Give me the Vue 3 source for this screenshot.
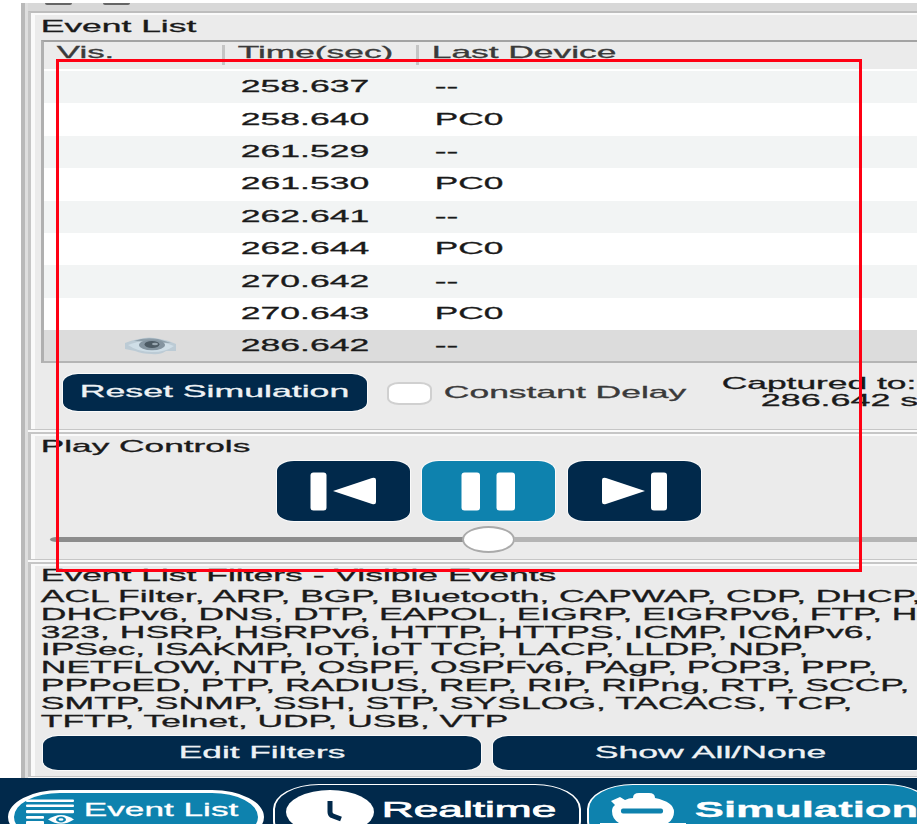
<script setup>
import { h } from 'vue'

// Wide label: one line of text fitted to the width w, baseline near 80% of its box.
const WideText = (p) => {
  const size = p.size || 17
  const box = Math.round(size * 1.2)
  return h('svg', { class: 'wide', width: p.w, height: box, style: { fontSize: size + 'px' } }, [
    h('text', { x: 0.8, y: box * 0.8 - 0.1, textLength: p.w - 1.5, lengthAdjust: 'spacingAndGlyphs', fill: 'currentColor' }, p.t),
  ])
}
WideText.props = ['t', 'w', 'size']

const events = [
  ['258.637', '--'], ['258.640', 'PC0'], ['261.529', '--'], ['261.530', 'PC0'], ['262.641', '--'],
  ['262.644', 'PC0'], ['270.642', '--'], ['270.643', 'PC0'], ['286.642', '--'],
]
const filters = [
  ['ACL Filter, ARP, BGP, Bluetooth, CAPWAP, CDP, DHCP,', 882],
  ['DHCPv6, DNS, DTP, EAPOL, EIGRP, EIGRPv6, FTP, H.', 888],
  ['323, HSRP, HSRPv6, HTTP, HTTPS, ICMP, ICMPv6,', 834],
  ['IPSec, ISAKMP, IoT, IoT TCP, LACP, LLDP, NDP,', 769],
  ['NETFLOW, NTP, OSPF, OSPFv6, PAgP, POP3, PPP,', 838],
  ['PPPoED, PTP, RADIUS, REP, RIP, RIPng, RTP, SCCP,', 870],
  ['SMTP, SNMP, SSH, STP, SYSLOG, TACACS, TCP,', 813],
  ['TFTP, Telnet, UDP, USB, VTP', 469],
]
</script>

<template>
  <div class="window">
    <div class="sidebar">
      <div class="topbar"><i></i><i></i></div>

      <section class="panel events">
        <div class="title"><WideText t="Event List" :w="157" /></div>
        <div class="table">
          <div class="row head">
            <span class="vis"><WideText t="Vis." :w="59" /></span>
            <span class="time"><WideText t="Time(sec)" :w="157" /></span>
            <span class="dev"><WideText t="Last Device" :w="186" /></span>
          </div>
          <div v-for="(e, i) in events" :key="i" class="row" :class="{ alt: i % 2 === 0, selected: i === 8 }">
            <span class="vis">
              <svg v-if="i === 8" class="eye" width="54" height="20" viewBox="0 0 54 20">
                <path d="M1 7Q8 4 15 3Q25 0 36 3Q44 4 52 8V15H42Q36 19 28 18Q18 18 11 15L1 13Z" fill="#bccbd5" />
                <path d="M4 9Q26 0 50 10Q42 16 28 16Q14 16 4 9Z" fill="#cfdee7" />
                <path d="M10 5Q20 1 34 3L47 7Q34 6 24 6Q16 5 10 5Z" fill="#8d9ea9" />
                <ellipse cx="28" cy="9" rx="13" ry="5.2" fill="#8494a0" />
                <ellipse cx="28" cy="8.5" rx="7.500" ry="3.4" fill="#4c5a64" />
                <ellipse cx="31" cy="8" rx="3" ry="1.3" fill="#98a6b0" />
              </svg>
            </span>
            <span class="time"><WideText :t="e[0]" :w="130" /></span>
            <span class="dev"><WideText :t="e[1]" :w="e[1] === '--' ? 25 : 70" /></span>
          </div>
        </div>
        <div class="actions">
          <button class="btn reset"><WideText t="Reset Simulation" :w="271" /></button>
          <span class="check"></span>
          <span class="delay"><WideText t="Constant Delay" :w="244" /></span>
          <div class="captured">
            <WideText t="Captured to:" :w="196" />
            <WideText class="second" t="286.642 s" :w="159" />
          </div>
        </div>
      </section>

      <section class="panel play">
        <div class="title"><WideText t="Play Controls" :w="211" /></div>
        <div class="controls">
          <button class="btn ctl">
            <svg width="133" height="60" viewBox="0 0 133 60">
              <rect x="33.5" y="11.5" width="16" height="38" rx="3" /><path d="M56 30L95 17Q99 16 99 19V41Q99 44 95 43Z" />
            </svg>
          </button>
          <button class="btn ctl active">
            <svg width="133" height="60" viewBox="0 0 133 60">
              <rect x="39.500" y="11.5" width="18.5" height="38" rx="3" /><rect x="74.500" y="11.5" width="18.5" height="38" rx="3" />
            </svg>
          </button>
          <button class="btn ctl">
            <svg width="133" height="60" viewBox="0 0 133 60">
              <rect x="83" y="11.5" width="16" height="38" rx="3" /><path d="M77 30L38 17Q34 16 34 19V41Q34 44 38 43Z" />
            </svg>
          </button>
        </div>
        <div class="slider"><span class="done"></span><span class="thumb"></span><span class="rest"></span></div>
      </section>

      <section class="panel filters">
        <div class="title"><WideText t="Event List Filters - Visible Events" :w="517" /></div>
        <div class="list">
          <div v-for="f in filters" :key="f[0]" class="line"><WideText :t="f[0]" :w="f[1]" /></div>
        </div>
        <div class="pair">
          <button class="btn edit"><WideText t="Edit Filters" :w="168" /></button>
          <button class="btn show"><WideText t="Show All/None" :w="233" /></button>
        </div>
      </section>
    </div>

    <nav class="modes">
      <div class="pill">
        <svg width="54" height="32" viewBox="0 0 54 32" fill="#fff">
          <rect x="0" y="2.500" width="48" height="2.6" rx="1" /><rect x="0" y="7.500" width="48" height="2.6" rx="1" />
          <rect x="0" y="13" width="48" height="3.2" rx="1" /><rect x="0" y="19" width="18" height="2.8" rx="1" />
          <rect x="0" y="24" width="18" height="4" rx="1" />
          <path d="M22 22.500Q35 13.500 48 22.500Q35 31 22 22.500Z" /><ellipse cx="35" cy="22.500" rx="5" ry="3" fill="#0e82ae" />
          <ellipse cx="35" cy="22.500" rx="2.500" ry="1.300" />
        </svg>
        <WideText t="Event List" :w="156" :size="18" />
      </div>
      <div class="mode real">
        <svg width="88" height="40" viewBox="0 0 88 40">
          <ellipse cx="44" cy="22" rx="44" ry="22" fill="#fff" />
          <path d="M44 11V22Q44 25 47 26L55 29" fill="none" stroke="#01294b" stroke-width="5" />
        </svg>
        <WideText t="Realtime" :w="176" :size="22" />
      </div>
      <div class="mode sim">
        <svg width="88" height="38" viewBox="0 0 88 38" fill="#fff">
          <path d="M34 5Q34 0 40 0H50Q56 0 56 5Q75 9 75 19Q75 26 69 30H87V38H1V30H20Q13 26 13 18Q13 14 16 12L12 8L21 4L26 7Q30 5 34 5Z" />
          <rect x="22" y="15.500" width="42" height="5" rx="2" fill="#0e82ae" />
        </svg>
        <WideText t="Simulation" :w="225" :size="22" />
      </div>
    </nav>

    <div class="marker"></div>
  </div>
</template>

<style>
body { margin: 0; background: #fff; }
svg.wide { display: block; flex: none; overflow: visible; }
svg.wide text { stroke: currentColor; stroke-width: 0.3px; }
</style>

<style scoped>
.window { position: relative; box-sizing: border-box; width: 917px; height: 824px; padding-top: 3px; overflow: hidden; font-family: "Liberation Sans", Arial, sans-serif; color: #1a1a1a; }
.window * { box-sizing: border-box; }
.sidebar { height: 775px; margin-left: 21px; padding-left: 3px; border-left: 4px solid #b9b9b9; background: #dedede; overflow: hidden; }
.topbar { display: flex; gap: 31px; height: 8px; padding-left: 17px; background: #d8d8d8; }
.topbar i { width: 27px; height: 1.5px; border-radius: 0 0 12px 12px; background: #666; }
.panel { border: solid #c6c6c6; border-width: 2px 0 1px 3px; background: #ebebeb; box-shadow: inset 4px 2px #fafafa, 0 3px #fafafa; padding-left: 8px; overflow: hidden; }
.title { height: 20px; padding-left: 1px; }
.events { height: 419px; border-top-color: #bdbdbd; }
.events .title { height: 27px; padding-top: 3px; }
.table { margin-left: 2px; height: 323px; border: solid #a3a3a3; border-width: 2px 0 2px 3px; border-left-color: #b0b0b0; border-bottom-color: #b4b4b4; background: #fff; }
.row { display: grid; grid-template-columns: 180px 196px 1fr; height: 32.4px; align-items: center; background: #fff; }
.row > span { height: 22px; }
.row.alt { background: #f2f4f4; }
.row.selected { height: 31px; background: #dcdcdc; }
.row.head { height: 27px; margin-bottom: 2px; background: #ebebeb; color: #3a3a3a; align-items: start; }
.time { padding-left: 16px; }
.dev { padding-left: 14px; }
.row.head .vis { padding-left: 12px; }
.row.head .time { border-left: 3px solid #c4c4c4; padding-left: 12px; margin-top: 3px; margin-left: -2px; height: 20px; }
.row.head .dev { border-left: 3px solid #c4c4c4; padding-left: 12px; margin-top: 3px; margin-left: -4px; height: 20px; }
.row.head .time svg, .row.head .dev svg { margin-top: -3px; }
.vis svg.eye { display: block; margin: 1px 0 0 80px; }
.btn { display: flex; justify-content: center; align-items: center; flex: none; margin: 0; padding: 0; border: 0; border-radius: 15px / 9px; background: #01294b; color: #eef2f5; box-shadow: 0 0 0 1px #fafafa; }
.actions { display: flex; align-items: flex-start; padding: 11px 0 0 24px; }
.reset { width: 304px; height: 37px; padding: 0 2px 3px 0; }
.check { flex: none; width: 45px; height: 23px; margin: 8px 11px 0 20px; border: 2px solid #d0d0d0; border-radius: 12px / 7px; background: #fff; }
.delay { flex: none; width: 278px; padding-top: 8px; color: #3a3a3a; }
.captured { flex: none; width: 196px; margin-top: -1px; }
.captured .second { margin: -3px 0 0 39px; }
.play { height: 128px; margin-top: 2px; }
.play .title { padding-top: 2px; height: 27px; }
.controls { display: flex; gap: 12.5px; padding-left: 237.5px; }
.ctl { width: 133px; height: 60px; border-radius: 17px / 10px; }
.ctl svg { fill: #fff; }
.active { background: #0e82ae; }
.slider { display: flex; align-items: center; height: 27px; margin: 5px 0 0 11px; }
.done { width: 413px; height: 5px; border-radius: 8px 0 0 8px / 3px 0 0 3px; background: #8c8c8c; }
.thumb { width: 53px; height: 27px; margin: 0 -1px; border: 2px solid #aaa; border-radius: 50%; background: #fff; }
.rest { flex: 1; height: 5px; background: #b4b4b4; }
.filters { height: 215px; margin-top: 2px; }
.filters .title { height: 22px; padding-top: 1px; }
.list { padding-left: 1px; }
.line { height: 17.8px; }
.pair { display: flex; gap: 12px; padding: 8px 0 0 4px; }
.pair .btn { height: 34px; padding: 0 1px 3px 0; }
.edit { width: 438px; }
.show { width: 436px; }
.modes { display: flex; height: 46px; background: #01294b; color: #fff; overflow: hidden; }
.pill { display: flex; flex: none; width: 256px; height: 54px; margin: 12px 9px 0 8px; padding: 1px 0 0 12px; border: solid #fff; border-width: 3px 6px; border-radius: 52px / 27px; background: #0e82ae; gap: 3px; }
.pill svg { margin-top: 3px; }
.pill svg.wide { margin-top: 4px; }
.mode { display: flex; flex: none; height: 62px; margin-top: 6px; border: solid #fff; border-width: 1px 2px; border-radius: 46px / 25px; }
.real { width: 308px; margin-right: 6px; padding: 5px 0 0 11px; gap: 7px; }
.real :deep(svg.wide text) { stroke-width: 0.7px; }
.real svg.wide { margin-top: 6px; }
.sim { width: 345px; padding: 8px 0 0 10px; gap: 7px; background: #0e82ae; font-weight: 700; }
.sim svg.wide { margin-top: 3px; }
.marker { position: absolute; left: 56px; top: 59px; width: 806px; height: 513px; border: 3px solid #ff0013; pointer-events: none; }
</style>
